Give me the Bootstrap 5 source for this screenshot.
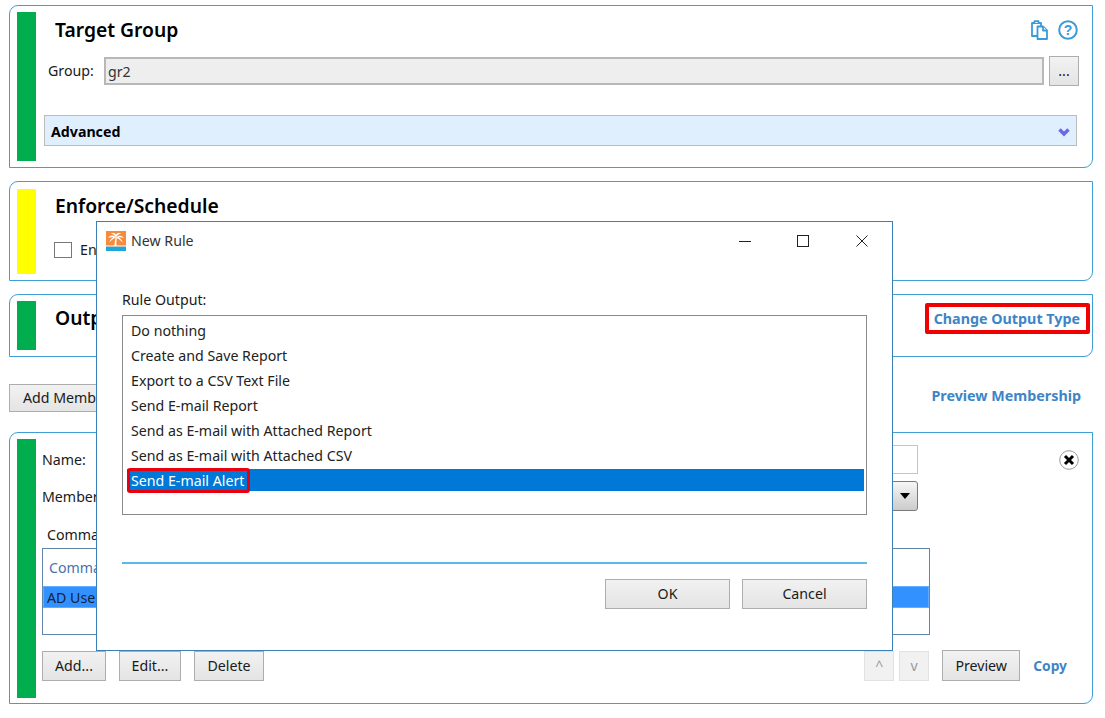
<!DOCTYPE html>
<html lang="en">
<head>
    <meta charset="UTF-8">
    <meta name="viewport" content="width=device-width, initial-scale=1, shrink-to-fit=no">
    <link rel="stylesheet" href="https://cdn.jsdelivr.net/npm/bootstrap@5.3.0/dist/css/bootstrap.min.css">
    <style>
        html, body { height: 718px; overflow: hidden; }
        body {
            font-family: "Noto Sans", "Open Sans", sans-serif;
            font-size: 14.2px;
            color: #1a1a1a;
            background: #fff;
            position: relative;
        }
        .page-wrap { padding: 5px 12px 0 9px; }
        .sect {
            display: flex;
            border: 1px solid #3d9fd3;
            border-radius: 9px 0 9px 0;
            padding: 6px 2px 6px 7px;
            margin-bottom: 13px;
        }
        .sect-pad7 { padding-top: 7px; padding-bottom: 6px; }
        .sect-last { padding-bottom: 5px; }
        .flag { width: 19px; flex: none; }
        .flag-green { background: #00ae4d; }
        .flag-yellow { background: #ffff00; }
        .sect-body { flex: 1; min-width: 0; }
        .sect-title { font-size: 19.3px; font-weight: 600; color: #000; line-height: 34px; height: 34px; margin: 0; }
        .title-gap { margin-left: 19px; }
        .out-body { height: 49px; }

        .top-row { height: 36px; margin: 0 12px 8px 19px; }
        .icon-pair { gap: 8px; }
        .group-row { height: 30px; margin: 0 11px 0 12px; }
        .group-row label { width: 56px; flex: none; }
        .group-field {
            flex: 1; height: 28px; padding: 0 2px; font-size: 14.2px; color: #333;
            background: #eee; border: 2px solid #b8b8b8; border-radius: 0;
        }
        .group-field:disabled { background: #eee; }
        .adv-bar {
            height: 31px; margin: 29px 13px 15px 8px; padding: 2px 6px 0;
            background: #e0effe; border: 1px solid #bcbcbc;
            font-weight: 700; color: #000;
        }
        .win-btn {
            height: 30px; padding: 0; font-size: 14.2px; color: #1a1a1a; line-height: 28px;
            border: 1px solid #adadad; border-radius: 0;
            background: linear-gradient(#f2f2f2, #e4e4e4);
        }
        .more-btn { width: 30px; margin-left: 5px; margin-top: -1px; }
        .tick-box { width: 18px; height: 16px; border: 1px solid #777; flex: none; }
        .tick-row { margin: 16px 0 0 18px; padding-bottom: 14px; }
        .blue-link { color: #3d85c6; font-weight: 700; text-decoration: none; font-size: 14.3px; }
        .red-mark { border: 4px solid #f00000; border-radius: 2px; padding: 0 6px 0 5px; height: 31px; margin-top: 2px; line-height: 23px; }
        .member-bar { margin: 27px 0 20px; padding-right: 12px; }
        .member-btn { width: 125px; height: 28px; line-height: 26px; text-align: left; padding-left: 13px; }
        .member-link { margin-bottom: 6px; }

        .m-row { margin-left: 6px; }
        .name-row { height: 29px; margin-top: 6px; margin-right: 11px; }
        .name-row label { width: 62px; flex: none; }
        .name-field { width: 814px; height: 29px; border: 1px solid #c4c4c4; border-radius: 0; }
        .close-mark { margin-left: 141px; flex: none; }
        .type-row { height: 30px; margin-top: 7px; margin-right: 172px; }
        .type-row label { width: 62px; flex: none; }
        .type-pick {
            flex: 1; height: 30px; padding-right: 7px;
            border: 1px solid #7a7a7a; border-radius: 3px;
            background: linear-gradient(#f6f6f6, #cbcbcb);
        }
        .cmd-label { margin: 14px 0 3px 11px; line-height: 20px; }
        .cmd-list { height: 87px; margin-right: 160px; border: 1px solid #5f86a8; }
        .cmd-head { height: 37px; line-height: 38px; padding-left: 6px; color: #4a72ad; }
        .cmd-sel { height: 22px; line-height: 21px; padding-left: 3px; background: #3391ff; border: 1px solid #64acff; color: #10233d; }
        .cmd-btns { margin-top: 16px; margin-right: 23px; margin-bottom: 17px; height: 30px; }
        .w-add { width: 64px; }
        .w-edit { width: 62px; margin-left: 13px; }
        .w-del { width: 70px; margin-left: 13px; }
        .w-move { width: 30px; margin-left: 5px; background: #f1f1f1; border-color: #e2e2e2; color: #9a9a9a; }
        .w-prev { width: 78px; margin: -1px 0 0 13px; height: 31px; }
        .copy-link { margin-left: 13px; font-size: 13.8px; }

        .rule-win {
            position: absolute; left: 96px; top: 221px; width: 797px; height: 430px;
            background: #fff; border: 1px solid #3a7fb5;
        }
        .win-head { height: 37px; padding-left: 9px; color: #333; }
        .win-head svg.app-mark { margin-right: 5px; }
        .win-ctl { width: 58px; text-align: center; line-height: 0; }
        .win-ctl-x { margin-left: 1px; }
        .win-ctls { margin-right: 1px; }
        .win-main { padding: 0 25px 0 25px; }
        .out-label { margin-top: 31px; line-height: 20px; height: 25px; }
        .out-list { height: 200px; border: 1px solid #8a8a8a; padding: 3px 2px 0 4px; }
        .out-item { height: 25px; line-height: 24px; padding-left: 4px; color: #222; }
        .out-sel { position: relative; height: 22px; line-height: 24px; background: #0078d7; color: #fff; }
        .red-box {
            position: absolute; left: 0; top: -1px; width: 123px; height: 25px;
            border: 3px solid #e8000f; border-radius: 3px;
        }
        .win-rule { height: 2px; background: #5bb8e8; margin-top: 47px; }
        .win-foot { margin-top: 15px; gap: 12px; }
        .foot-btn { width: 125px; }
    </style>
    <title>New Rule</title>
</head>
<body>

    <div class="page-wrap">
        <div class="sect">
            <div class="flag flag-green"></div>
            <div class="sect-body">
                <div class="top-row d-flex align-items-center justify-content-between">
                    <h2 class="sect-title">Target Group</h2>
                    <div class="d-flex align-items-center icon-pair">
                        <svg width="20" height="20" viewBox="0 0 20 20" fill="#fff" stroke="#3b9ad8" stroke-width="1.8" stroke-linejoin="round">
                            <path d="M2 3h9v13H2z"/>
                            <path d="M4.500 3V1.200h4V3"/>
                            <path d="M7.500 6.500h5.500l4 4v8.500H7.500z"/>
                            <path d="M13 6.500v4h4"/>
                        </svg>
                        <svg width="20" height="20" viewBox="0 0 20 20">
                            <circle cx="10" cy="10" r="8.800" fill="none" stroke="#3b9ad8" stroke-width="2"/>
                            <text x="10" y="15" text-anchor="middle" font-family="Liberation Sans" font-weight="700" font-size="14" fill="#3b9ad8">?</text>
                        </svg>
                    </div>
                </div>
                <div class="group-row d-flex align-items-center">
                    <label>Group:</label>
                    <input class="form-control group-field" type="text" value="gr2" disabled>
                    <button class="btn win-btn more-btn" type="button">...</button>
                </div>
                <div class="adv-bar d-flex align-items-center justify-content-between">
                    <span>Advanced</span>
                    <svg width="12" height="10" viewBox="0 0 12 10"><path d="M1.500 2.500 6 7l4.500-4.500" fill="none" stroke="#6a68ee" stroke-width="3.400"/></svg>
                </div>
            </div>
        </div>

        <div class="sect sect-pad7">
            <div class="flag flag-yellow"></div>
            <div class="sect-body">
                <h2 class="sect-title title-gap">Enforce/Schedule</h2>
                <div class="tick-row d-flex align-items-center gap-2">
                    <span class="tick-box"></span>
                    <span>Enabled</span>
                </div>
            </div>
        </div>

        <div class="sect">
            <div class="flag flag-green"></div>
            <div class="sect-body out-body d-flex justify-content-between align-items-start">
                <h2 class="sect-title title-gap">Output</h2>
                <a class="blue-link red-mark" href="#">Change Output Type</a>
            </div>
        </div>

        <div class="member-bar d-flex justify-content-between align-items-center">
            <button class="btn win-btn member-btn" type="button">Add Member</button>
            <a class="blue-link member-link" href="#">Preview Membership</a>
        </div>

        <div class="sect sect-last">
            <div class="flag flag-green"></div>
            <div class="sect-body">
                <div class="m-row name-row d-flex align-items-center">
                    <label>Name:</label>
                    <input class="form-control name-field" type="text">
                    <svg class="close-mark" width="20" height="20" viewBox="0 0 20 20">
                        <circle cx="10" cy="10" r="9.300" fill="#fff" stroke="#9a9a9a"/>
                        <path d="M6 6l8 8M14 6l-8 8" stroke="#000" stroke-width="3"/>
                    </svg>
                </div>
                <div class="m-row type-row d-flex align-items-center">
                    <label>Member</label>
                    <div class="type-pick d-flex align-items-center justify-content-end">
                        <svg width="10" height="6" viewBox="0 0 10 6"><path d="M0 0h10L5 6z" fill="#000"/></svg>
                    </div>
                </div>
                <div class="cmd-label">Commands:</div>
                <div class="m-row cmd-list">
                    <div class="cmd-head">Command</div>
                    <div class="cmd-sel">AD User</div>
                </div>
                <div class="m-row cmd-btns d-flex align-items-center">
                    <button class="btn win-btn w-add" type="button">Add...</button>
                    <button class="btn win-btn w-edit" type="button">Edit...</button>
                    <button class="btn win-btn w-del" type="button">Delete</button>
                    <button class="btn win-btn w-move ms-auto" type="button">^</button>
                    <button class="btn win-btn w-move" type="button">v</button>
                    <button class="btn win-btn w-prev" type="button">Preview</button>
                    <a class="blue-link copy-link" href="#">Copy</a>
                </div>
            </div>
        </div>
    </div>

    <div class="rule-win">
        <div class="win-head d-flex align-items-center">
            <svg class="app-mark" width="20" height="20" viewBox="0 0 20 20">
                <rect width="20" height="20" fill="#f58b3b"/>
                <rect y="14.500" width="20" height="1.200" fill="#fff"/>
                <rect y="15.700" width="20" height="4.300" fill="#19a7de"/>
                <path d="M8.300 15c.5-3 .8-6 1.200-8.500h1.400c-.5 3-.6 5.500-.4 8.500z" fill="#fff"/>
                <path d="M10 6.500C7.500 3.800 4.500 4 2 6.800c2.200-.7 4-.8 5.400-.3C5.500 7.300 4 9 3.400 11.500 5.500 9 7.500 7.500 10 6.500zM10 6.500c2.800-2.500 5.500-2.300 8 .4-2.200-.7-4-.8-5.400-.3 2 .9 3.400 2.600 4 5-2.100-2.500-4.100-4-6.600-5.100zM10 6.500C9 4.500 7.500 3 5 2.500c2.300-.9 4.200-.3 5 1.500.9-1.800 2.800-2.400 5-1.500-2.500.5-4 2-5 4z" fill="#fff"/>
            </svg>
            <span class="flex-grow-1">New Rule</span>
            <div class="d-flex win-ctls">
                <span class="win-ctl"><svg width="12" height="12" viewBox="0 0 12 12"><path d="M0 6.500h12" stroke="#222"/></svg></span>
                <span class="win-ctl"><svg width="12" height="12" viewBox="0 0 12 12"><rect x=".5" y=".5" width="11" height="11" fill="none" stroke="#222"/></svg></span>
                <span class="win-ctl win-ctl-x"><svg width="12" height="12" viewBox="0 0 12 12"><path d="M.5.500l11 11M11.500.500l-11 11" stroke="#222"/></svg></span>
            </div>
        </div>
        <div class="win-main">
            <div class="out-label">Rule Output:</div>
            <div class="out-list">
                <div class="out-item">Do nothing</div>
                <div class="out-item">Create and Save Report</div>
                <div class="out-item">Export to a CSV Text File</div>
                <div class="out-item">Send E-mail Report</div>
                <div class="out-item">Send as E-mail with Attached Report</div>
                <div class="out-item">Send as E-mail with Attached CSV</div>
                <div class="out-item out-sel">Send E-mail Alert<span class="red-box"></span></div>
            </div>
            <div class="win-rule"></div>
            <div class="win-foot d-flex justify-content-end">
                <button class="btn win-btn foot-btn" type="button">OK</button>
                <button class="btn win-btn foot-btn" type="button">Cancel</button>
            </div>
        </div>
    </div>

    <script src="https://cdn.jsdelivr.net/npm/bootstrap@5.3.0/dist/js/bootstrap.bundle.min.js"></script>
</body>
</html>
